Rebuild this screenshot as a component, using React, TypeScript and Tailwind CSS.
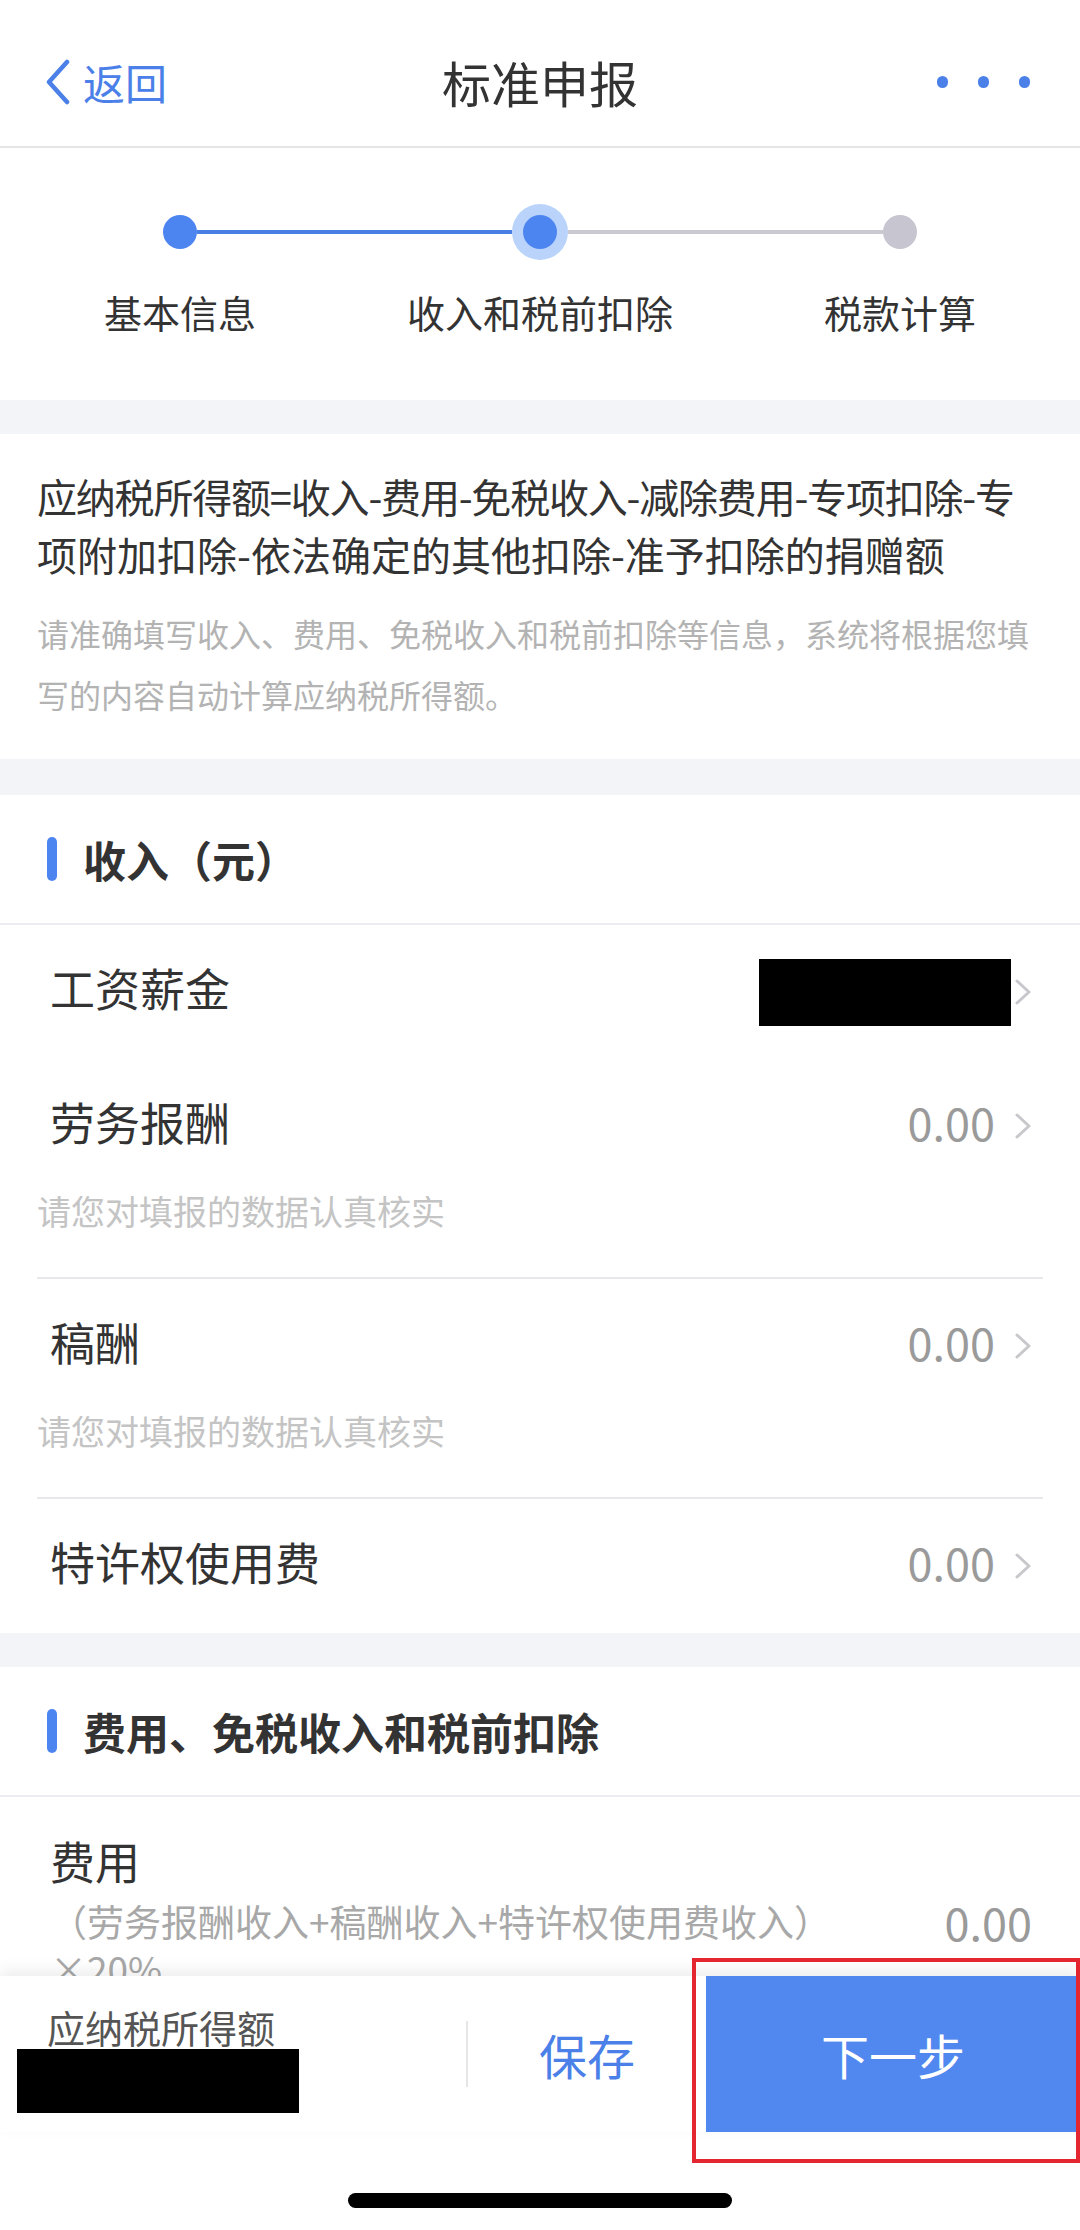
import React from 'react';

const Chevron = () => (
    <svg width="18" height="28" viewBox="0 0 18 28" className="shrink-0">
        <polyline points="3,3 15,14 3,25" fill="none" stroke="#c7c7cc" strokeWidth="3" strokeLinecap="round" strokeLinejoin="round" />
    </svg>
);

const SectionTitle = ({ title }: { title: string }) => (
    <div className="h-[130px] flex items-center px-[47px] border-b-2 border-[#ececf0]">
        <div className="w-[10px] h-[44px] rounded-full bg-[#4d85f0]" />
        <div className="ml-[26px] text-[43px] leading-[56px] font-semibold text-[#333]">{title}</div>
    </div>
);

const Row = ({ label, value, redacted }: { label: string; value?: string; redacted?: boolean }) => (
    <div className="h-[134px] flex items-center justify-between pl-[13px] pr-[11px]">
        <span className="text-[45px] leading-[60px] text-[#333] mb-[8px]">{label}</span>
        <div className="flex items-center">
            {redacted ? (
                <div className="w-[252px] h-[67px] bg-black mr-[3px]" />
            ) : (
                <span className="text-[45px] leading-[56px] text-[#9a9a9a] mr-[19px] mb-[8px]">{value}</span>
            )}
            <Chevron />
        </div>
    </div>
);

const Hint = () => (
    <div className="h-[86px] text-[34px] leading-[36px] text-[#c4c4c4] border-b-2 border-[#e8e8ec]">
        请您对填报的数据认真核实
    </div>
);

const Step = ({ label, left, right, state }: { label: string; left?: string; right?: string; state: 'done' | 'active' | 'todo' }) => (
    <div className="flex-1 flex flex-col items-center">
        <div className="w-full h-[56px] flex items-center">
            <div className={`flex-1 h-[4px] ${left ?? ''}`} />
            {state === 'active' ? (
                <div className="w-[56px] h-[56px] rounded-full bg-[#b9d3fb] flex items-center justify-center">
                    <div className="w-[34px] h-[34px] rounded-full bg-[#4d85f0]" />
                </div>
            ) : (
                <div className={`w-[34px] h-[34px] rounded-full ${state === 'done' ? 'bg-[#4d85f0]' : 'bg-[#c6c5d0]'}`} />
            )}
            <div className={`flex-1 h-[4px] ${right ?? ''}`} />
        </div>
        <div className="mt-[27px] text-[38px] leading-[50px] text-[#333]">{label}</div>
    </div>
);

export default function App() {
    return (
        <div className="relative w-[1080px] h-[2230px] flex flex-col bg-white overflow-hidden font-['Noto_Sans_CJK_SC',sans-serif]">
            <header className="h-[148px] shrink-0 grid grid-cols-[1fr_auto_1fr] items-center pt-[18px] px-[45px] border-b-2 border-[#e6e6e8]">
                <div className="flex items-center text-[#4a80e8]">
                    <svg width="26" height="46" viewBox="0 0 26 46">
                        <polyline points="22,3 4,23 22,43" fill="none" stroke="#4a80e8" strokeWidth="4.5" strokeLinecap="round" strokeLinejoin="round" />
                    </svg>
                    <span className="ml-[12px] text-[42px] leading-[56px]">返回</span>
                </div>
                <div className="text-[49px] leading-[60px] text-[#333]">标准申报</div>
                <div className="flex justify-end items-center gap-[30px] pr-[5px]">
                    <div className="w-[11px] h-[12px] rounded-full bg-[#4a80e8]" />
                    <div className="w-[11px] h-[12px] rounded-full bg-[#4a80e8]" />
                    <div className="w-[11px] h-[12px] rounded-full bg-[#4a80e8]" />
                </div>
            </header>

            <main className="flex-1 overflow-hidden bg-[#f3f4f8]">
                <section className="bg-white flex pt-[56px] pb-[63px]">
                    <Step label="基本信息" right="bg-[#4a80e4]" state="done" />
                    <Step label="收入和税前扣除" left="bg-[#4a80e4]" right="bg-[#c9c9cf]" state="active" />
                    <Step label="税款计算" left="bg-[#c9c9cf]" state="todo" />
                </section>

                <section className="mt-[34px] bg-white pl-[37px] pt-[33px] pb-[34px]">
                    <div className="text-[40px] leading-[58px] text-[#333] whitespace-nowrap">
                        <div className="tracking-[-1.2px]">应纳税所得额=收入-费用-免税收入-减除费用-专项扣除-专</div>
                        <div>项附加扣除-依法确定的其他扣除-准予扣除的捐赠额</div>
                    </div>
                    <div className="mt-[20px] text-[32px] leading-[61px] text-[#b3b3b3] whitespace-nowrap">
                        <div>请准确填写收入、费用、免税收入和税前扣除等信息，系统将根据您填</div>
                        <div>写的内容自动计算应纳税所得额。</div>
                    </div>
                </section>

                <section className="mt-[36px] bg-white">
                    <SectionTitle title="收入（元）" />
                    <div className="mx-[37px]">
                        <Row label="工资薪金" redacted />
                        <Row label="劳务报酬" value="0.00" />
                        <Hint />
                        <Row label="稿酬" value="0.00" />
                        <Hint />
                        <Row label="特许权使用费" value="0.00" />
                    </div>
                </section>

                <section className="mt-[34px] bg-white">
                    <SectionTitle title="费用、免税收入和税前扣除" />
                    <div className="pl-[50px] pr-[48px] pt-[35px]">
                        <div className="text-[45px] leading-[58px] text-[#333]">费用</div>
                        <div className="mt-[8px] flex items-start justify-between">
                            <div className="text-[37px] leading-[47px] text-[#a8a8a8]">
                                （劳务报酬收入+稿酬收入+特许权使用费收入）<br />×20%
                            </div>
                            <div className="text-[45px] leading-[47px] text-[#9a9a9a]">0.00</div>
                        </div>
                    </div>
                </section>
            </main>

            <footer className="relative z-10 h-[156px] shrink-0 flex bg-white shadow-[0_-6px_14px_rgba(0,0,0,0.07)]">
                <div className="w-[466px] flex flex-col pt-[29px]">
                    <div className="ml-[47px] text-[38px] leading-[44px] text-[#555]">应纳税所得额</div>
                    <div className="ml-[17px] w-[282px] h-[64px] bg-black" />
                </div>
                <div className="self-center w-[2px] h-[66px] bg-[#e6e6e8]" />
                <div className="flex-1 flex items-center justify-center text-[48px] leading-[60px] text-[#4a80e8]">保存</div>
                <div className="w-[374px] flex items-center justify-center bg-[#5088ef] text-[48px] leading-[60px] text-white">下一步</div>
            </footer>

            <div className="h-[98px] shrink-0 flex justify-center pt-[61px] bg-white">
                <div className="w-[384px] h-[15px] rounded-full bg-black" />
            </div>

            <div className="absolute left-[692px] top-[1958px] w-[388px] h-[205px] border-[4px] border-[#e3262f] z-20 pointer-events-none" />
        </div>
    );
}
